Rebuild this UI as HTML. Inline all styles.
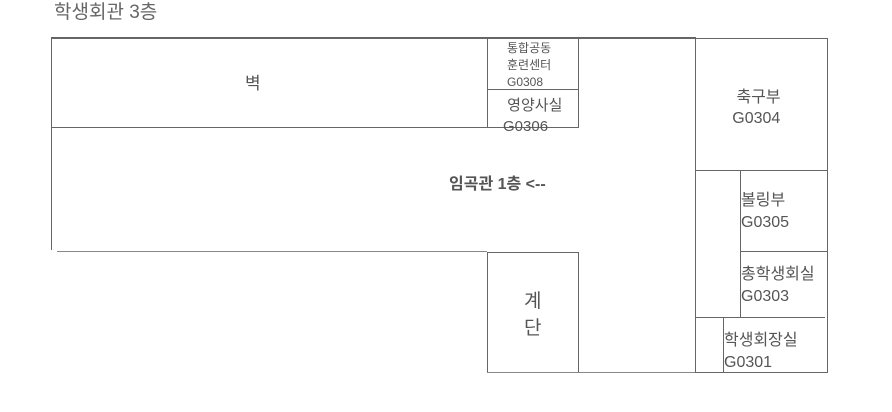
<!DOCTYPE html>
<html><head><meta charset="utf-8"><style>
body{margin:0;width:892px;height:412px;background:#fff;position:relative;overflow:hidden;font-family:"Liberation Sans","Noto Sans CJK KR",sans-serif;color:#555}
.l{position:absolute;background:#666}
.t{position:absolute;white-space:nowrap;line-height:1.2}
</style></head><body>
<div class="t" style="left:54px;top:2px;font-size:19px;color:#666">학생회관 3층</div>
<div class="l" style="left:51px;top:37px;width:645px;height:2px"></div>
<div class="l" style="left:51px;top:37px;width:1px;height:213px"></div>
<div class="l" style="left:51px;top:127px;width:528px;height:1px"></div>
<div class="l" style="left:57px;top:251px;width:430px;height:1px;background:#888"></div>
<div class="l" style="left:487px;top:38px;width:1px;height:90px"></div>
<div class="l" style="left:578px;top:38px;width:1px;height:90px"></div>
<div class="l" style="left:487px;top:89px;width:92px;height:1px"></div>
<div class="l" style="left:487px;top:252px;width:92px;height:1px"></div>
<div class="l" style="left:487px;top:252px;width:1px;height:121px"></div>
<div class="l" style="left:578px;top:252px;width:1px;height:121px"></div>
<div class="l" style="left:487px;top:372px;width:209px;height:1px;background:#888"></div>
<div class="l" style="left:695px;top:38px;width:133px;height:1px"></div>
<div class="l" style="left:695px;top:38px;width:1px;height:335px"></div>
<div class="l" style="left:827px;top:38px;width:1px;height:335px"></div>
<div class="l" style="left:695px;top:170px;width:133px;height:1px"></div>
<div class="l" style="left:740px;top:171px;width:1px;height:146px"></div>
<div class="l" style="left:740px;top:251px;width:88px;height:1px"></div>
<div class="l" style="left:695px;top:317px;width:130px;height:1px"></div>
<div class="l" style="left:723px;top:317px;width:1px;height:56px"></div>
<div class="l" style="left:696px;top:372px;width:132px;height:1px"></div>
<div class="t" style="left:245px;top:74px;font-size:17px">벽</div>
<div class="t" style="left:507px;top:40px;font-size:12px;line-height:17px">통합공동<br>훈련센터</div>
<div class="t" style="left:507px;top:75px;font-size:12px">G0308</div>
<div class="t" style="left:503px;top:95px;font-size:15px;line-height:21px">&nbsp;영양사실<br>G0306</div>
<div class="t" style="left:449px;top:175px;font-size:16px;font-weight:bold;color:#555">임곡관 1층 &lt;--</div>
<div class="t" style="left:524px;top:288px;font-size:19px;line-height:27px">계<br>단</div>
<div class="t" style="left:732px;top:87px;font-size:16px;line-height:21px;text-align:center">&nbsp;축구부<br>G0304</div>
<div class="t" style="left:741px;top:190px;font-size:16px;line-height:22px">볼링부<br>G0305</div>
<div class="t" style="left:741px;top:264px;font-size:16px;line-height:22px">총학생회실<br>G0303</div>
<div class="t" style="left:724px;top:330px;font-size:16px;line-height:22px">학생회장실<br>G0301</div>
</body></html>
